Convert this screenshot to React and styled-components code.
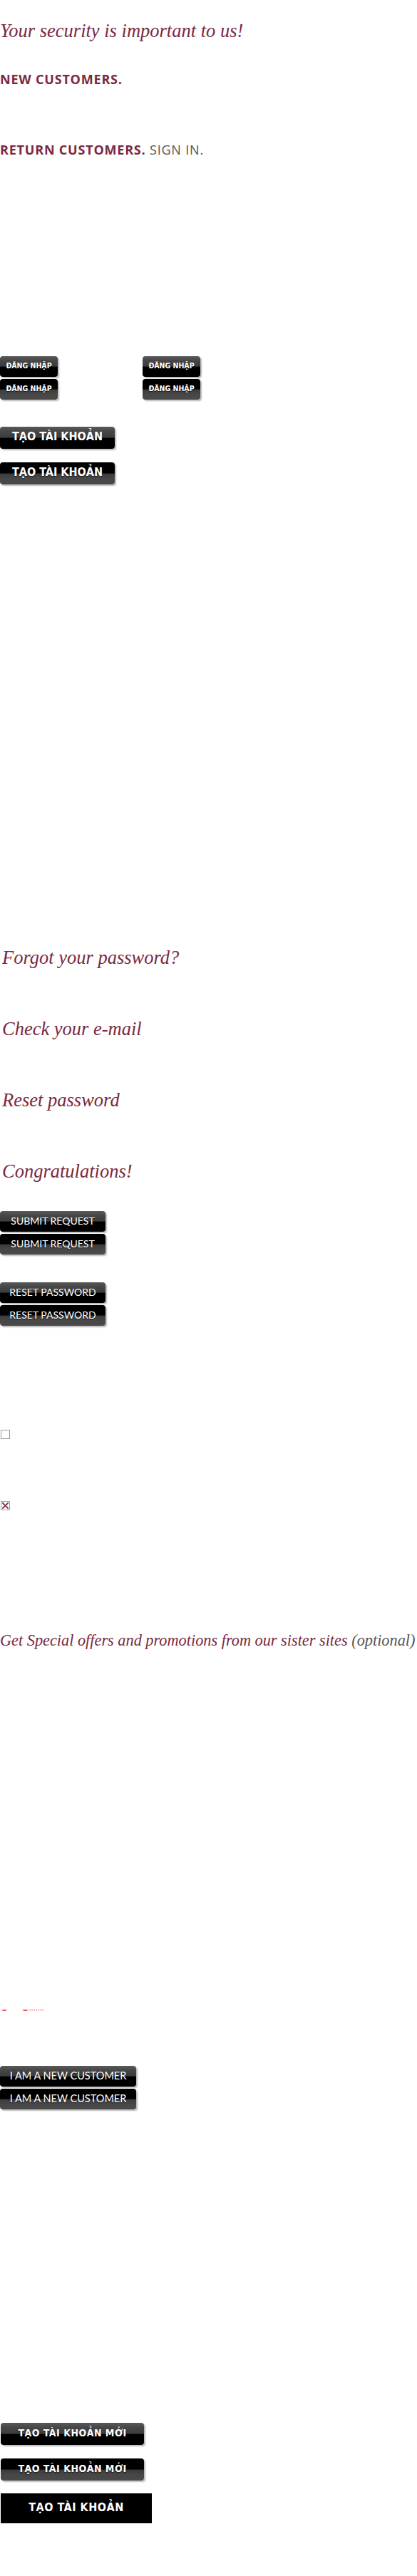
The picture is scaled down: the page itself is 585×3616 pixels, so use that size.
import React from 'react';
import styled, { createGlobalStyle, css } from 'styled-components';

const MAROON = '#7a2940';

const GlobalStyle = createGlobalStyle`
  html, body { margin: 0; padding: 0; background: #fff; }
  body { font-family: "Liberation Serif", serif; }
  * { box-sizing: border-box; }
`;

const Page = styled.main`
  display: flex;
  flex-direction: column;
  align-items: flex-start;
  min-height: 3616px;
`;

const Title = styled.h1`
  margin: ${p => p.$mt}px 0 0;
  height: 32px;
  font: italic 400 26.5px/32px "Liberation Serif", serif;
  color: ${MAROON};
  white-space: nowrap;
`;

const CustomerHeading = styled.h3`
  margin: ${p => p.$mt}px 0 0;
  height: 22px;
  font: 700 18px/22px "Open Sans", Lato, sans-serif;
  letter-spacing: 0.8px;
  color: ${MAROON};
  text-transform: uppercase;
  white-space: nowrap;
`;

const Muted = styled.span`
  font-weight: 400;
  color: #555;
`;

const SectionTitle = styled.h2`
  margin: ${p => p.$mt}px 0 0 ${p => p.$ml || 0}px;
  height: ${p => p.$lh}px;
  font: italic 400 ${p => p.$fs}px/${p => p.$lh}px "Liberation Serif", serif;
  color: ${MAROON};
  white-space: nowrap;
`;

const Optional = styled.span`
  color: #555;
`;

const ButtonGrid = styled.div`
  display: flex;
  gap: ${p => p.$gap}px;
  margin: ${p => p.$mt}px 0 0 ${p => p.$ml || 0}px;
`;

const ButtonStack = styled.div`
  display: flex;
  flex-direction: column;
  gap: ${p => p.$gap}px;
`;

const displayFont = css`
  font-family: "DejaVu Sans Condensed", "DejaVu Sans", sans-serif;
  font-weight: 700;
`;

const sansFont = css`
  font-family: Lato, "Open Sans", sans-serif;
  font-weight: 400;
`;

const normalBg = css`
  background: linear-gradient(to bottom, #5a5a5a 0%, #474747 20%, #3c3c3c 48%, #000 53%, #000 100%);
`;

const hoverBg = css`
  background: linear-gradient(to bottom, #000 0%, #000 48%, #3c3c3c 53%, #474747 75%, #4a4a4a 100%);
`;

const SpriteButton = styled.button`
  display: flex;
  align-items: center;
  justify-content: center;
  width: ${p => p.$w}px;
  height: ${p => p.$h}px;
  padding: 0 0 ${p => p.$pb || 0}px;
  border: 0;
  border-radius: 4px;
  ${p => (p.$hover ? hoverBg : normalBg)}
  box-shadow: 2px 2px 2px rgba(0, 0, 0, 0.28);
  color: #fff;
  cursor: pointer;
  ${p => (p.$display ? displayFont : sansFont)}
  font-size: ${p => p.$fs}px;
  letter-spacing: ${p => p.$ls || 0}px;
  line-height: 1;
  text-transform: uppercase;
  text-shadow: 0 1px 1px rgba(0, 0, 0, 0.6);
  white-space: nowrap;
`;

const BlackButton = styled.button`
  display: flex;
  align-items: center;
  justify-content: center;
  margin: ${p => p.$mt}px 0 0 1px;
  width: 212px;
  height: 42px;
  padding: 0 0 2px;
  border: 0;
  background: #000;
  color: #fff;
  ${displayFont}
  font-size: 16px;
  letter-spacing: 0.5px;
  line-height: 1;
  cursor: pointer;
`;

const CheckBox = styled.span`
  display: flex;
  align-items: center;
  justify-content: center;
  margin: ${p => p.$mt}px 0 0 1px;
  width: 13px;
  height: 13px;
  border: 1px solid #9c9c9c;
  background: #fff;
`;

const Marker = styled.svg`
  display: block;
  margin-top: ${p => p.$mt}px;
`;

const Check = ({ checked, mt }) => (
  <CheckBox $mt={mt}>
    {checked && (
      <svg width="9" height="9" viewBox="0 0 9 9">
        <path d="M1 1 L8 8 M8 1 L1 8" stroke="#8d3d5a" strokeWidth="2" strokeLinecap="square" />
      </svg>
    )}
  </CheckBox>
);

const Pair = ({ label, w, h, fs, ls, pb, display }) => (
  <ButtonStack $gap={3}>
    <SpriteButton $w={w} $h={h} $fs={fs} $ls={ls} $pb={pb} $display={display}>{label}</SpriteButton>
    <SpriteButton $w={w} $h={h} $fs={fs} $ls={ls} $pb={pb} $display={display} $hover>{label}</SpriteButton>
  </ButtonStack>
);

export default function App() {
  return (
    <>
      <GlobalStyle />
      <Page>
        <Title $mt={27}>Your security is important to us!</Title>
        <CustomerHeading $mt={41}>New customers.</CustomerHeading>
        <CustomerHeading $mt={77}>
          Return customers. <Muted>Sign in.</Muted>
        </CustomerHeading>

        <ButtonGrid $mt={279} $gap={119}>
          <Pair label="Đăng nhập" w={81} h={29} fs={10.5} pb={3} display />
          <Pair label="Đăng nhập" w={81} h={29} fs={10.5} pb={3} display />
        </ButtonGrid>

        <ButtonGrid $mt={38} $gap={0}>
          <ButtonStack $gap={19}>
            <SpriteButton $w={161} $h={31} $fs={16} $pb={3} $display>Tạo tài khoản</SpriteButton>
            <SpriteButton $w={161} $h={31} $fs={16} $pb={3} $display $hover>Tạo tài khoản</SpriteButton>
          </ButtonStack>
        </ButtonGrid>

        <SectionTitle $mt={647} $ml={3} $fs={26.5} $lh={34}>Forgot your password?</SectionTitle>
        <SectionTitle $mt={66} $ml={3} $fs={26.5} $lh={34}>Check your e-mail</SectionTitle>
        <SectionTitle $mt={66} $ml={3} $fs={26.5} $lh={34}>Reset password</SectionTitle>
        <SectionTitle $mt={66} $ml={3} $fs={26.5} $lh={34}>Congratulations!</SectionTitle>

        <ButtonGrid $mt={39} $gap={0}>
          <Pair label="Submit request" w={148} h={29} fs={14} pb={1} />
        </ButtonGrid>
        <ButtonGrid $mt={39} $gap={0}>
          <Pair label="Reset password" w={148} h={29} fs={14} pb={1} />
        </ButtonGrid>

        <Check mt={146} />
        <Check mt={87} checked />

        <SectionTitle $mt={169} $fs={22.3} $lh={28}>
          Get Special offers and promotions from our sister sites <Optional>(optional)</Optional>
        </SectionTitle>

        <Marker $mt={503} width="62" height="5" viewBox="0 0 62 5">
          <path d="M2 1 H10 Q6 5 2 1 Z" fill="#f02c2c" />
          <path d="M31 1 H40 Q35.5 5 31 1 Z" fill="#f02c2c" />
          <path d="M41 1.5 H61" stroke="#f04848" strokeWidth="1" strokeDasharray="2 1" />
        </Marker>

        <ButtonGrid $mt={75} $gap={0}>
          <Pair label="I am a new customer" w={191} h={29} fs={14.5} pb={1} />
        </ButtonGrid>

        <ButtonGrid $mt={440} $ml={1} $gap={0}>
          <ButtonStack $gap={19}>
            <SpriteButton $w={201} $h={31} $fs={14} $ls={0.5} $pb={3} $display>Tạo tài khoản mới</SpriteButton>
            <SpriteButton $w={201} $h={31} $fs={14} $ls={0.5} $pb={3} $display $hover>Tạo tài khoản mới</SpriteButton>
          </ButtonStack>
        </ButtonGrid>

        <BlackButton $mt={18}>TẠO TÀI KHOẢN</BlackButton>
      </Page>
    </>
  );
}
